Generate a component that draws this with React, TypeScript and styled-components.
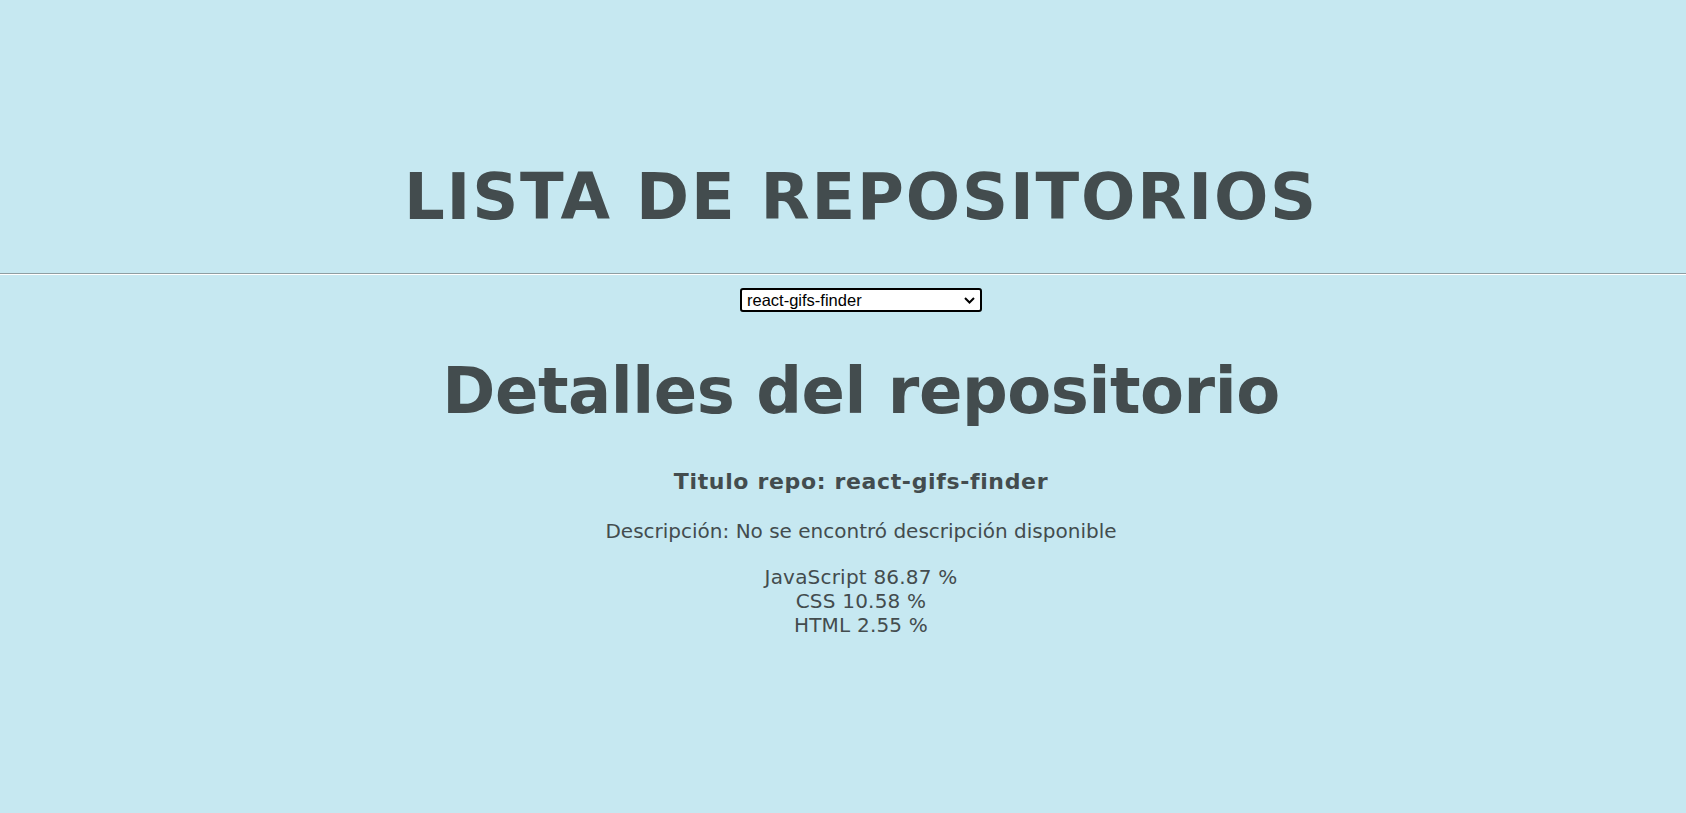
import React, { useState } from 'react';
import styled, { createGlobalStyle } from 'styled-components';

const repos = [
    {
        name: 'react-gifs-finder',
        description: '',
        languages: [
            { name: 'JavaScript', pct: 86.87 },
            { name: 'CSS', pct: 10.58 },
            { name: 'HTML', pct: 2.55 },
        ],
    },
];

const GlobalStyle = createGlobalStyle`
    html, body {
        margin: 0;
        padding: 0;
        background: #c6e8f1;
    }
    body {
        min-height: 813px;
        font-family: "DejaVu Sans", Verdana, sans-serif;
        color: #434c4e;
    }
`;

const Page = styled.div`
    display: flex;
    flex-direction: column;
    align-items: center;
    min-height: 813px;
`;

const Header = styled.header`
    box-sizing: border-box;
    width: 100%;
    padding: 160px 0 39px 36px;
    text-align: center;
`;

const Title = styled.h1`
    margin: 0;
    font-size: 64px;
    font-weight: bold;
    letter-spacing: 1.8px;
    line-height: normal;
`;

const Divider = styled.hr`
    width: 100%;
    margin: 0;
    border: none;
    border-top: 1px solid #8f9ea2;
    border-bottom: 1px solid #ffffff;
`;

const Body = styled.main`
    box-sizing: border-box;
    width: 100%;
    padding-left: 36px;
    display: flex;
    flex-direction: column;
    align-items: center;
`;

const SelectWrap = styled.div`
    position: relative;
    margin-top: 13px;
    width: 242px;
    height: 24px;
`;

const Select = styled.select`
    appearance: none;
    width: 100%;
    height: 100%;
    box-sizing: border-box;
    margin: 0;
    padding: 0 24px 0 5px;
    border: 2px solid #000;
    border-radius: 3px;
    background: #fff;
    color: #000;
    font-family: "Liberation Sans", Arial, sans-serif;
    font-size: 16.5px;
    outline: none;
`;

const Chevron = styled.svg`
    position: absolute;
    right: 7px;
    top: 9px;
    width: 11px;
    height: 7px;
    pointer-events: none;
`;

const Details = styled.section`
    display: flex;
    flex-direction: column;
    align-items: center;
    text-align: center;
`;

const DetailsTitle = styled.h2`
    margin: 42px 0 0;
    font-size: 64px;
    font-weight: bold;
    letter-spacing: -0.45px;
    line-height: normal;
`;

const RepoName = styled.h3`
    margin: 41px 0 0;
    font-size: 22px;
    font-weight: bold;
    letter-spacing: 0.65px;
    line-height: normal;
`;

const Description = styled.p`
    margin: 25px 0 0;
    font-size: 20px;
    line-height: normal;
`;

const LangList = styled.ul`
    list-style: none;
    margin: 22px 0 0;
    padding: 0;
`;

const LangItem = styled.li`
    font-size: 20px;
    letter-spacing: 0.2px;
    line-height: normal;
`;

export default function App() {
    const [selected, setSelected] = useState(repos[0].name);
    const repo = repos.find((r) => r.name === selected) || repos[0];

    return (
        <>
            <GlobalStyle />
            <Page>
                <Header>
                    <Title>LISTA DE REPOSITORIOS</Title>
                </Header>
                <Divider />
                <Body>
                    <SelectWrap>
                        <Select
                            value={selected}
                            onChange={(e) => setSelected(e.target.value)}
                        >
                            {repos.map((r) => (
                                <option key={r.name} value={r.name}>
                                    {r.name}
                                </option>
                            ))}
                        </Select>
                        <Chevron viewBox="0 0 11 7">
                            <path
                                d="M1 1 L5.5 5.5 L10 1"
                                fill="none"
                                stroke="#000"
                                strokeWidth="2"
                            />
                        </Chevron>
                    </SelectWrap>
                    <Details>
                        <DetailsTitle>Detalles del repositorio</DetailsTitle>
                        <RepoName>Titulo repo: {repo.name}</RepoName>
                        <Description>
                            Descripción:{' '}
                            {repo.description ||
                                'No se encontró descripción disponible'}
                        </Description>
                        <LangList>
                            {repo.languages.map((l) => (
                                <LangItem key={l.name}>
                                    {l.name} {l.pct} %
                                </LangItem>
                            ))}
                        </LangList>
                    </Details>
                </Body>
            </Page>
        </>
    );
}
